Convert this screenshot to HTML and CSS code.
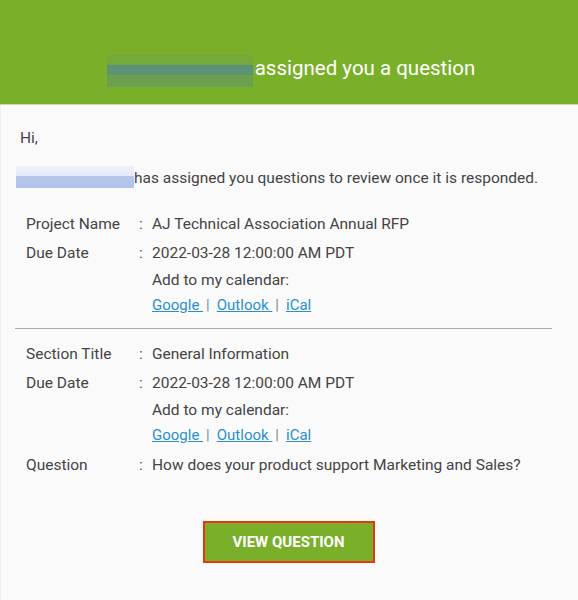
FILE: index.html
```html
<!DOCTYPE html>
<html lang="en">
<head>
    <meta charset="UTF-8">
    <meta name="viewport" content="width=device-width, initial-scale=1.0">
    <title>Question assigned</title>
    <link rel="stylesheet" href="styles.css">
</head>
<body>
    <div class="header">
        <h1><span class="blur blur-header"></span>assigned you a question</h1>
    </div>

    <div class="content">
        <p class="greeting">Hi,</p>
        <p class="intro"><span class="blur blur-name"></span>has assigned you questions to review once it is responded.</p>

        <!-- Dettagli progetto -->
        <div class="details">
            <div class="label">Project Name</div>
            <div class="colon">:</div>
            <div class="value">AJ Technical Association Annual RFP</div>

            <div class="label">Due Date</div>
            <div class="colon">:</div>
            <div class="value multi">
                2022-03-28 12:00:00 AM PDT
                <div class="sub">Add to my calendar:</div>
                <div class="sub links"><a href="#">Google </a><span class="sep">|</span><a href="#">Outlook </a><span class="sep">|</span><a href="#">iCal</a></div>
            </div>
        </div>

        <hr class="divider">

        <!-- Dettagli sezione -->
        <div class="details">
            <div class="label">Section Title</div>
            <div class="colon">:</div>
            <div class="value">General Information</div>

            <div class="label">Due Date</div>
            <div class="colon">:</div>
            <div class="value multi">
                2022-03-28 12:00:00 AM PDT
                <div class="sub">Add to my calendar:</div>
                <div class="sub links"><a href="#">Google </a><span class="sep">|</span><a href="#">Outlook </a><span class="sep">|</span><a href="#">iCal</a></div>
            </div>

            <div class="label">Question</div>
            <div class="colon">:</div>
            <div class="value">How does your product support Marketing and Sales?</div>
        </div>

        <div class="actions">
            <a class="button" href="#">View Question</a>
        </div>
    </div>
</body>
</html>
```

FILE: styles.css
```css
body {
    font-family: Roboto, "Liberation Sans", sans-serif;
    margin: 0;
    padding: 0;
    background-color: #fafafa;
    color: #444444;
}
.header {
    background-color: #7aaf29;
    height: 104px;
    border-bottom: 1px solid #c9e0a4;
    display: flex;
    align-items: flex-end;
    justify-content: center;
}
.header h1 {
    margin: 0 0 17px 0;
    padding-left: 4px;
    font-size: 20.5px;
    font-weight: 400;
    color: #ffffff;
    display: flex;
    align-items: center;
}
.blur {
    display: inline-block;
}
.blur-header {
    width: 146px;
    height: 32px;
    margin-top: 6px;
    margin-right: 2px;
    background: linear-gradient(to bottom, rgba(110,165,70,0.6) 0, rgba(110,165,70,0.6) 30%, #5a8f7a 30%, #5f9472 64%, #6aa04f 64%, #6aa04f 100%);
}
.blur-name {
    width: 118px;
    height: 22px;
    vertical-align: -5px;
    background: linear-gradient(to bottom, #eef0f8 0, #e6eaf6 45%, #b6c6ea 45%, #b3c3ea 100%);
}
.content {
    padding: 22px 21px 40px 19px;
    border-left: 1px solid #eeeeee;
    font-size: 15.5px;
}
.greeting {
    margin: 0 0 17px 0;
    line-height: 22px;
}
.intro {
    margin: 0 0 21px -4px;
    line-height: 22px;
}
.details {
    display: grid;
    grid-template-columns: 113px 13px 1fr;
    padding-left: 6px;
    line-height: 29px;
}
.colon {
    color: #555555;
}
.multi {
    padding-bottom: 3px;
}
.sub {
    line-height: 25px;
}
.links {
    font-size: 15px;
}
.links a {
    color: #2a8fce;
    text-decoration: underline;
}
.sep {
    color: #888888;
    margin: 0 7px 0 3px;
}
.divider {
    border: 0;
    border-top: 1px solid #aaaaaa;
    margin: 7px 5px 11px -5px;
}
.actions {
    display: flex;
    justify-content: center;
    margin-top: 41px;
}
.button {
    display: block;
    width: 168px;
    height: 38px;
    line-height: 38px;
    text-align: center;
    background-color: #7aaf29;
    border: 2px solid #e8360e;
    color: #ffffff;
    font-size: 15px;
    font-weight: 700;
    text-transform: uppercase;
    text-decoration: none;
}
```
